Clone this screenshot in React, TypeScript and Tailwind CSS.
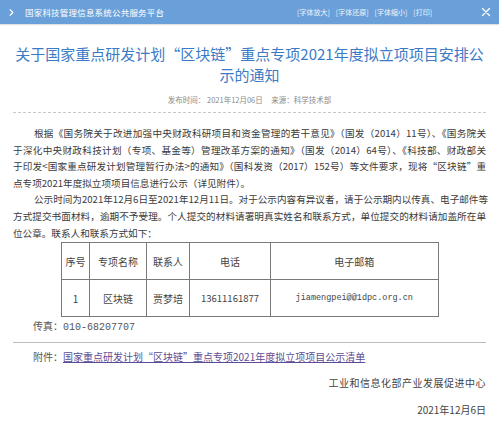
import { ChevronRight } from "lucide-react";

const FONT = { fontFamily: '"Noto Sans CJK SC", "Noto Sans", sans-serif' };
const MONO = { fontFamily: '"Liberation Mono", "Noto Sans CJK SC", monospace' };

const para1 = [
    "根据《国务院关于改进加强中央财政科研项目和资金管理的若干意见》（国发（2014）11号）、《国务院关",
    "于深化中央财政科技计划（专项、基金等）管理改革方案的通知》（国发（2014）64号）、《科技部、财政部关",
    "于印发<国家重点研发计划管理暂行办法>的通知》（国科发资（2017）152号）等文件要求，现将“区块链”重",
    "点专项2021年度拟立项项目信息进行公示（详见附件）。",
];

const para2 = [
    "公示时间为2021年12月6日至2021年12月11日。对于公示内容有异议者，请于公示期内以传真、电子邮件等",
    "方式提交书面材料，逾期不予受理。个人提交的材料请署明真实姓名和联系方式，单位提交的材料请加盖所在单",
    "位公章。联系人和联系方式如下：",
];

function Paragraph({ lines }: { lines: string[] }) {
    return (
        <div className="text-[9.6px] leading-[16.6px] text-[#3a3a3a] whitespace-nowrap">
            {lines.map((line, i) => (
                <div
                    key={i}
                    className={`${i === 0 ? "pl-[21px]" : ""} ${i < lines.length - 1 ? "text-justify [text-align-last:justify]" : ""}`}
                >
                    {line}
                </div>
            ))}
        </div>
    );
}

const cell = "flex items-center justify-center shrink-0 border-r-[1.5px] border-b-[1.5px] border-[#7a7a7a]";

export default function App() {
    return (
        <div className="w-[499px] h-[423px] overflow-hidden bg-white" style={FONT}>
            {/* top bar */}
            <div className="h-[24px] bg-[#6aa0d9] flex items-center text-white shadow-[0_1px_1px_rgba(0,0,0,0.12)]">
                <ChevronRight size={11} strokeWidth={2.5} className="ml-[6px] shrink-0 text-white" />
                <span className="ml-[8px] text-[8.5px] tracking-[0.2px] whitespace-nowrap">国家科技管理信息系统公共服务平台</span>
                <div className="flex-1" />
                <div className="flex items-center gap-[6px] text-[7px] text-[#eef4fb] whitespace-nowrap">
                    <span>[字体放大]</span>
                    <span>[字体还原]</span>
                    <span>[字体缩小]</span>
                    <span>[打印]</span>
                </div>
                <svg width="10" height="10" viewBox="0 0 10 10" className="ml-[49px] mr-[8px] shrink-0">
                    <path d="M1.5 1.5L8.5 8.5M8.5 1.5L1.5 8.5" stroke="#ffffff" strokeWidth="1.4" strokeLinecap="round" />
                </svg>
            </div>

            {/* title */}
            <h1 className="mt-[19px] px-[12px] text-center text-[15px] leading-[21px] text-[#3b7bc6]">
                关于国家重点研发计划“区块链”重点专项2021年度拟立项项目安排公示的通知
            </h1>
            <div className="mt-[9px] text-center text-[7.5px] leading-[12px] text-[#8a8a8a]">
                发布时间：&nbsp;2021年12月06日&nbsp;&nbsp;&nbsp;&nbsp;&nbsp;来源：科学技术部
            </div>
            <div className="mx-[13px] mt-[6px] border-t border-dashed border-[#c8c8c8]" />

            {/* body */}
            <div className="px-[13px] mt-[12px]">
                <Paragraph lines={para1} />
                <Paragraph lines={para2} />

                <div className="pl-[48px] pt-[1px]">
                    <div className="w-[378px] flex flex-col border-l-[1.5px] border-t-[1.5px] border-[#7a7a7a] text-[10px] text-[#444]">
                        <div className="flex h-[37px]">
                            <div className={`${cell} w-[28px]`}>序号</div>
                            <div className={`${cell} w-[57px]`}>专项名称</div>
                            <div className={`${cell} w-[43px]`}>联系人</div>
                            <div className={`${cell} w-[81px]`}>电话</div>
                            <div className={`${cell} w-[167.5px]`}>电子邮箱</div>
                        </div>
                        <div className="flex h-[37px]">
                            <div className={`${cell} w-[28px]`}>1</div>
                            <div className={`${cell} w-[57px]`}>区块链</div>
                            <div className={`${cell} w-[43px]`}>贾梦培</div>
                            <div className={`${cell} w-[81px] text-[9.5px]`}>13611161877</div>
                            <div className={`${cell} w-[167.5px] text-[8.5px]`} style={MONO}>
                                jiamengpei@@1dpc.org.cn
                            </div>
                        </div>
                    </div>
                </div>

                <div className="pl-[20px] mt-[1px] text-[10px] leading-[16px] text-[#555]">
                    传真：<span style={MONO}>010-68207707</span>
                </div>
            </div>

            <div className="mx-[13px] mt-[6px] border-t border-[#bdbdbd]" />

            <div className="px-[13px] mt-[6px] text-[10px] leading-[16px]">
                <div className="pl-[20px] text-[#555]">
                    附件：
                    <a href="#" className="text-[#5b4b93] underline">
                        国家重点研发计划“区块链”重点专项2021年度拟立项项目公示清单
                    </a>
                </div>
                <div className="mt-[10px] text-right text-[#444] tracking-[0.5px]">工业和信息化部产业发展促进中心</div>
                <div className="mt-[11px] text-right text-[#444]">2021年12月6日</div>
            </div>
        </div>
    );
}
